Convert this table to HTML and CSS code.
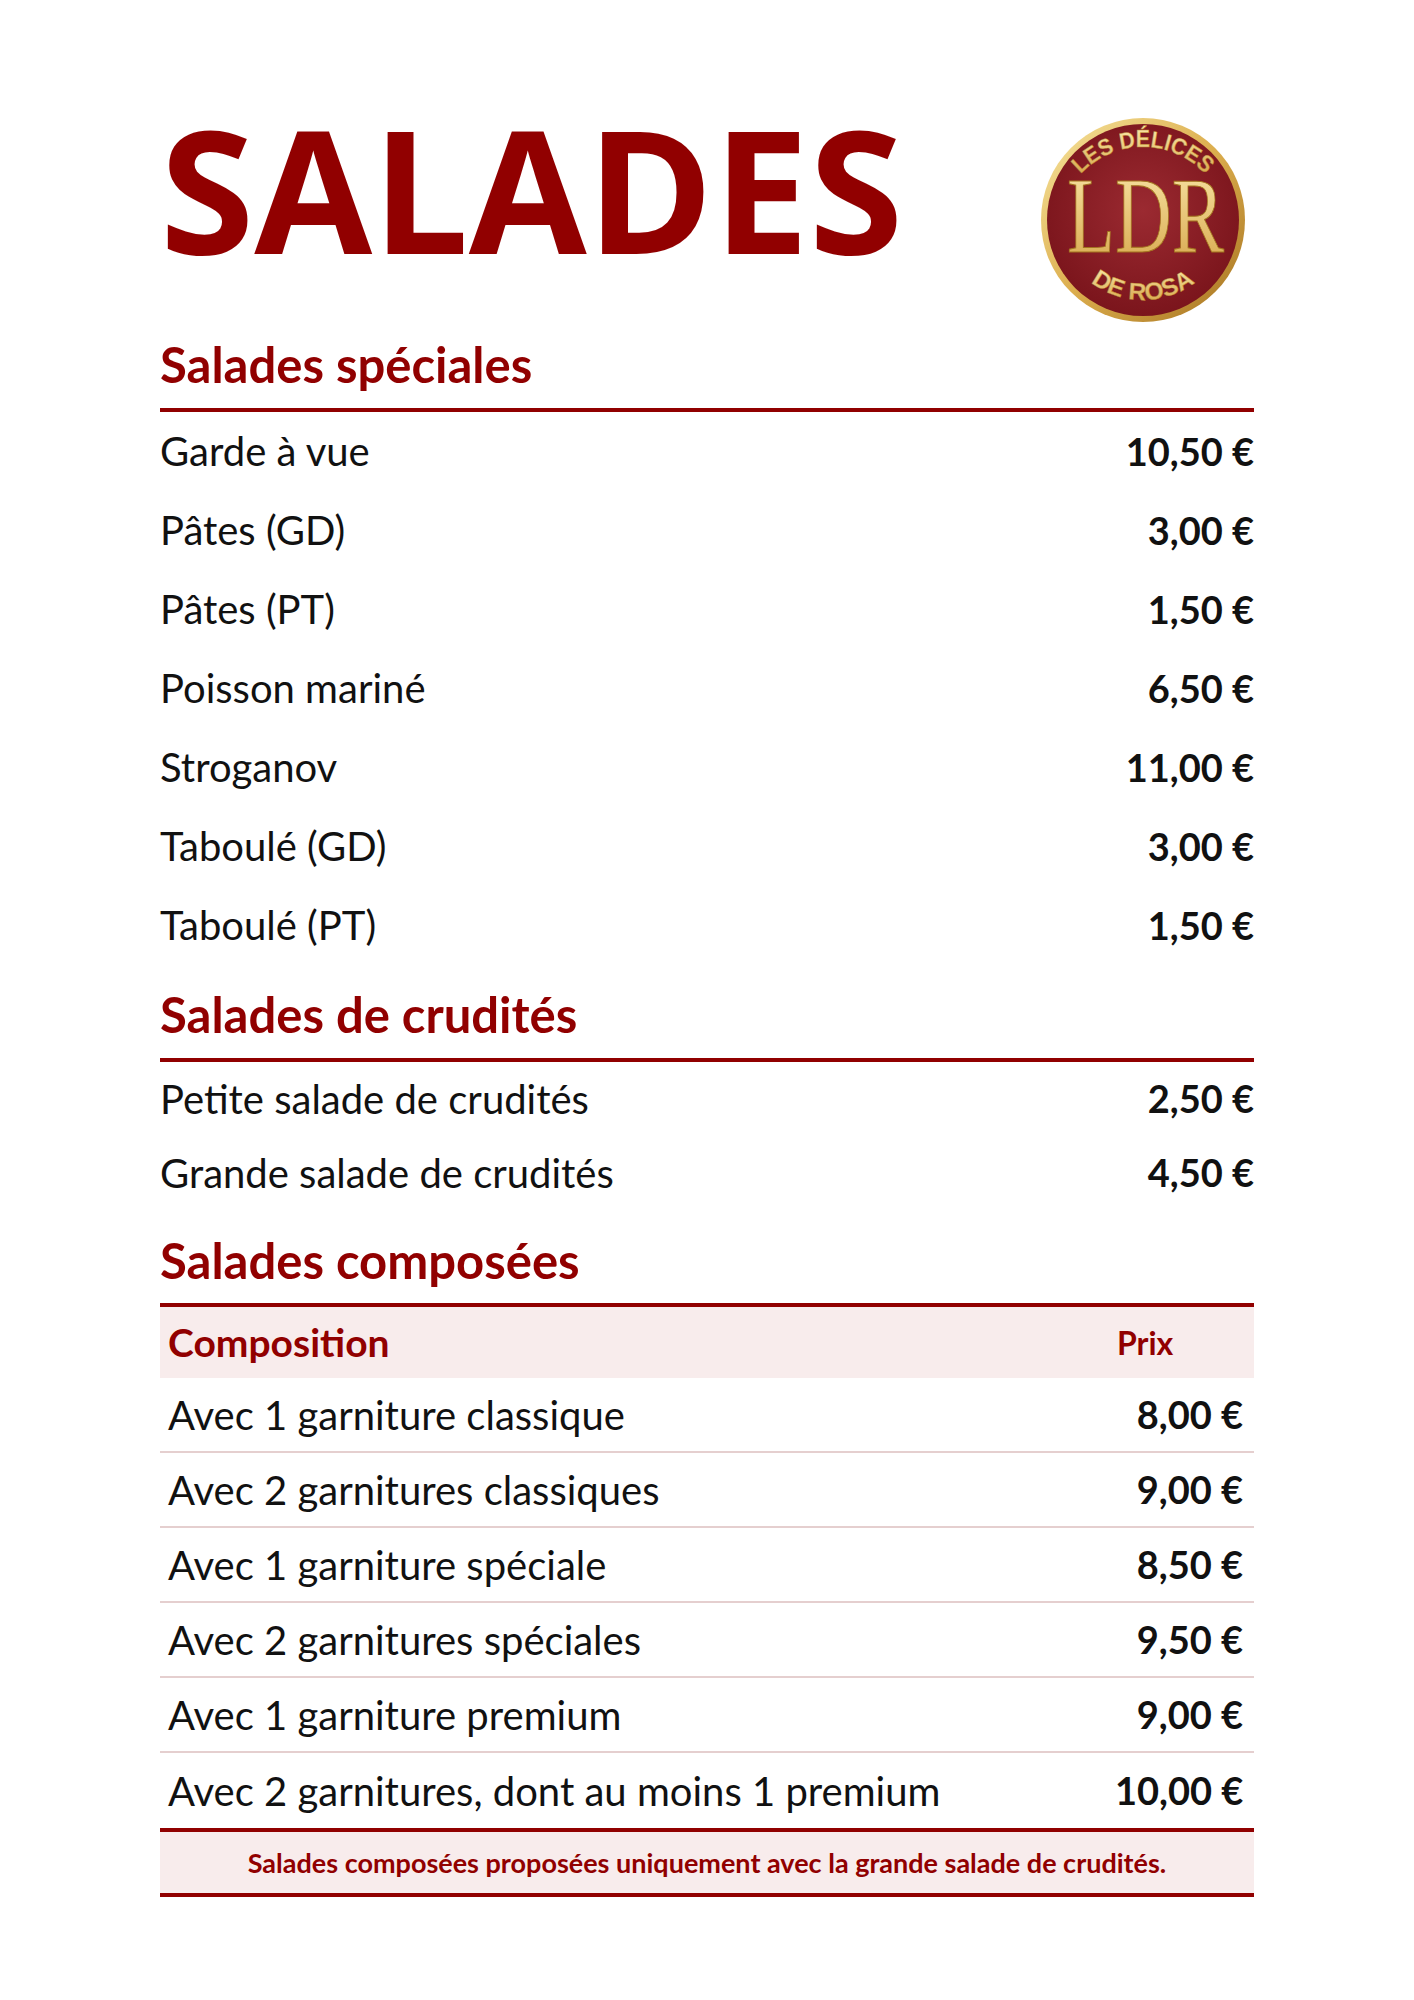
FILE: index.html
```html
<!DOCTYPE html>
<html lang="fr">
<head>
<meta charset="utf-8">
<title>Salades</title>
<link rel="stylesheet" href="styles.css">
</head>
<body>
<div class="page">
  <header class="top">
    <h1 class="title">SALADES</h1>
    <svg class="logo" viewBox="0 0 220 220" width="220" height="220" aria-label="Les Délices de Rosa">
      <defs>
        <linearGradient id="gold" x1="0" y1="0" x2="1" y2="1">
          <stop offset="0" stop-color="#f8e6a0"/>
          <stop offset="0.5" stop-color="#dcae4e"/>
          <stop offset="1" stop-color="#a5721f"/>
        </linearGradient>
        <radialGradient id="red" cx="0.5" cy="0.45" r="0.55">
          <stop offset="0" stop-color="#9b2a31"/>
          <stop offset="1" stop-color="#7b151c"/>
        </radialGradient>
        <linearGradient id="goldtext" x1="0" y1="0" x2="0" y2="1">
          <stop offset="0" stop-color="#fbe9ab"/>
          <stop offset="1" stop-color="#d5a347"/>
        </linearGradient>
        <path id="arcTop" d="M 26,122 A 85,85 0 0 1 196,122"/>
        <path id="arcBot" d="M 25,104 A 86,86 0 0 0 197,104"/>
      </defs>
      <circle cx="111" cy="110" r="102" fill="url(#gold)"/>
      <circle cx="111" cy="110" r="96" fill="url(#red)"/>
      <text class="logo-arc" font-size="23" fill="url(#goldtext)" stroke="#b8892e" stroke-width="0.4"><textPath href="#arcTop" startOffset="50%" text-anchor="middle" textLength="140" lengthAdjust="spacingAndGlyphs">LES DÉLICES</textPath></text>
      <text class="logo-ldr" x="113.5" y="142" font-size="109" text-anchor="middle" textLength="157" lengthAdjust="spacingAndGlyphs" fill="url(#goldtext)" stroke="#a3741f" stroke-width="1">LDR</text>
      <text class="logo-arc" font-size="24" fill="url(#goldtext)" stroke="#b8892e" stroke-width="0.4"><textPath href="#arcBot" startOffset="50%" text-anchor="middle" textLength="112" lengthAdjust="spacingAndGlyphs">DE ROSA</textPath></text>
    </svg>
  </header>

  <section class="sec sec-special">
    <h2 class="sec-title">Salades spéciales</h2>
    <ul class="list list-special">
      <li class="item"><span class="name">Garde à vue</span><span class="price">10,50 €</span></li>
      <li class="item"><span class="name">Pâtes (GD)</span><span class="price">3,00 €</span></li>
      <li class="item"><span class="name">Pâtes (PT)</span><span class="price">1,50 €</span></li>
      <li class="item"><span class="name">Poisson mariné</span><span class="price">6,50 €</span></li>
      <li class="item"><span class="name">Stroganov</span><span class="price">11,00 €</span></li>
      <li class="item"><span class="name">Taboulé (GD)</span><span class="price">3,00 €</span></li>
      <li class="item"><span class="name">Taboulé (PT)</span><span class="price">1,50 €</span></li>
    </ul>
  </section>

  <section class="sec sec-crudites">
    <h2 class="sec-title">Salades de crudités</h2>
    <ul class="list list-crudites">
      <li class="item"><span class="name">Petite salade de crudités</span><span class="price">2,50 €</span></li>
      <li class="item"><span class="name">Grande salade de crudités</span><span class="price">4,50 €</span></li>
    </ul>
  </section>

  <section class="sec sec-composees">
    <h2 class="sec-title">Salades composées</h2>
    <div class="table">
      <div class="trow thead">
        <div class="cell cell-name">Composition</div>
        <div class="cell cell-price">Prix</div>
      </div>
      <div class="trow tbody">
        <div class="cell cell-name">Avec 1 garniture classique</div>
        <div class="cell cell-price">8,00 €</div>
      </div>
      <div class="trow tbody">
        <div class="cell cell-name">Avec 2 garnitures classiques</div>
        <div class="cell cell-price">9,00 €</div>
      </div>
      <div class="trow tbody">
        <div class="cell cell-name">Avec 1 garniture spéciale</div>
        <div class="cell cell-price">8,50 €</div>
      </div>
      <div class="trow tbody">
        <div class="cell cell-name">Avec 2 garnitures spéciales</div>
        <div class="cell cell-price">9,50 €</div>
      </div>
      <div class="trow tbody">
        <div class="cell cell-name">Avec 1 garniture premium</div>
        <div class="cell cell-price">9,00 €</div>
      </div>
      <div class="trow tbody">
        <div class="cell cell-name">Avec 2 garnitures, dont au moins 1 premium</div>
        <div class="cell cell-price">10,00 €</div>
      </div>
    </div>
    <p class="note">Salades composées proposées uniquement avec la grande salade de crudités.</p>
  </section>
</div>
</body>
</html>
```

FILE: styles.css
```css
html, body {
  margin: 0;
  background: #ffffff;
}

.page {
  padding: 102px 160px 60px;
  font-family: "Lato", "Liberation Sans", sans-serif;
  color: #111111;
}

.top {
  display: flex;
  justify-content: space-between;
  align-items: flex-start;
}

.title {
  margin: 0;
  font-family: "Open Sans", "Liberation Sans", sans-serif;
  font-weight: 700;
  font-size: 171px;
  line-height: 172px;
  color: #910000;
}

.logo {
  display: block;
  width: 220px;
  height: 220px;
  margin-top: 8px;
  margin-right: 2px;
  margin-bottom: -2px;
}

.logo-arc {
  font-family: "Liberation Sans", sans-serif;
  font-weight: 700;
}

.logo-ldr {
  font-family: "Liberation Serif", serif;
}

.sec-title {
  margin: 0;
  font-size: 49px;
  font-weight: 700;
  line-height: 1.2;
  color: #910000;
  padding-bottom: 14px;
  border-bottom: 4px solid #910000;
}

.sec-special {
  margin-top: 7px;
}

.sec-crudites {
  margin-top: 20px;
}

.sec-composees {
  margin-top: 21px;
}

.list {
  list-style: none;
  margin: 0;
  padding: 0;
}

.item {
  display: flex;
  justify-content: space-between;
  align-items: center;
  font-size: 40px;
  line-height: 1.2;
}

.list-special .item {
  height: 79px;
}

.list-crudites .item {
  height: 74px;
}

.price {
  font-size: 38px;
  font-weight: 700;
  white-space: nowrap;
}

.trow {
  display: grid;
  grid-template-columns: 1fr 139px;
  align-items: center;
}

.thead {
  height: 71px;
  background: #f8ecec;
}

.thead .cell {
  color: #910000;
  font-weight: 700;
}

.thead .cell-name {
  font-size: 39px;
}

.thead .cell-price {
  font-size: 32px;
  padding-left: 2px;
  text-align: left;
}

.tbody {
  height: 73px;
  border-bottom: 2px solid #e5cfcf;
  font-size: 40px;
}

.tbody:last-child {
  border-bottom: none;
  height: 75px;
}

.cell {
  line-height: 1.2;
}

.cell-name {
  padding-left: 8px;
}

.tbody .cell-price {
  font-size: 38px;
  font-weight: 700;
  text-align: right;
  padding-right: 11px;
  white-space: nowrap;
}

.note {
  margin: 0;
  height: 61px;
  display: flex;
  align-items: center;
  justify-content: center;
  background: #f8ecec;
  border-top: 4px solid #910000;
  border-bottom: 4px solid #910000;
  font-size: 27px;
  font-weight: 700;
  color: #910000;
}
```
